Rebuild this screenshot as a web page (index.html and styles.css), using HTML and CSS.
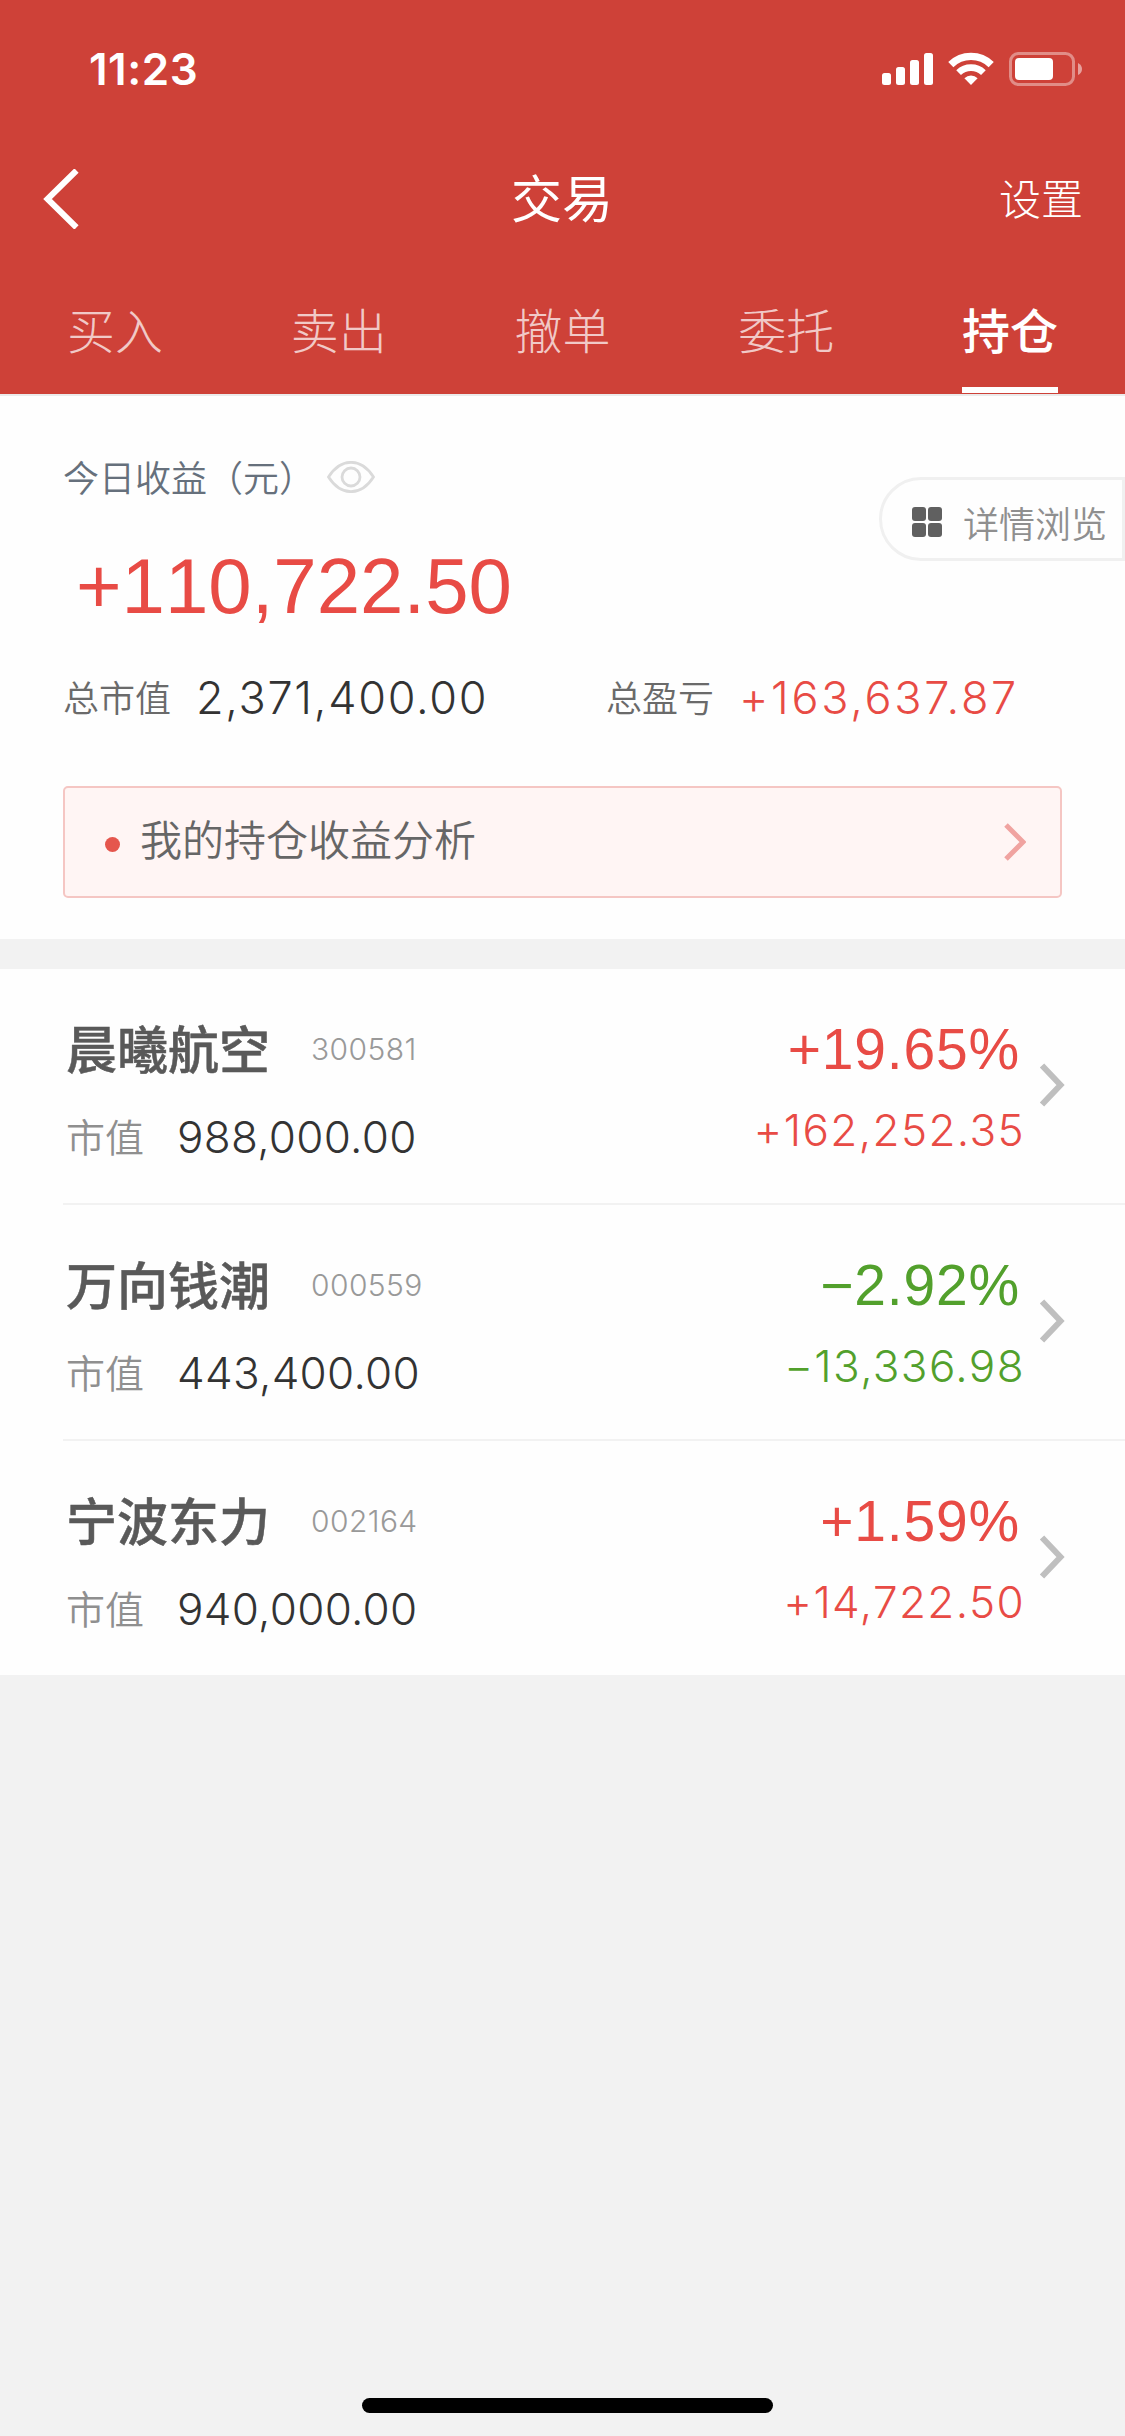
FILE: index.html
```html
<!DOCTYPE html>
<html lang="zh-CN">
<head>
  <meta charset="UTF-8">
  <title>交易</title>
  <link rel="stylesheet" href="styles.css">
</head>
<body>

  <header>
    <div class="status-bar">
      <span class="time">11:23</span>
      <svg class="signal" width="51" height="34" viewBox="0 0 51 34" fill="#fff">
        <rect x="0" y="21" width="9" height="12" rx="2.5"/>
        <rect x="14" y="15" width="9" height="18" rx="2.5"/>
        <rect x="28" y="8" width="9" height="25" rx="2.5"/>
        <rect x="42" y="1" width="9" height="32" rx="2.5"/>
      </svg>
      <svg class="wifi" width="46" height="34" viewBox="0 0 46 34" fill="none" stroke="#fff">
        <path d="M2.8 12.6 A29 29 0 0 1 43.2 12.6" stroke-width="7.4"/>
        <path d="M10.6 20.6 A18 18 0 0 1 35.4 20.6" stroke-width="6.8"/>
        <path d="M23 33 L16.4 26.2 A9.6 9.6 0 0 1 29.6 26.2 Z" fill="#fff" stroke="none"/>
      </svg>
      <svg class="battery" width="74" height="34" viewBox="0 0 74 34">
        <rect x="1.5" y="1.5" width="63" height="31" rx="8" fill="none" stroke="#fff" stroke-opacity=".4" stroke-width="3"/>
        <rect x="6" y="6" width="38" height="22" rx="4" fill="#fff"/>
        <path d="M69 11 Q73 13 73 17 Q73 21 69 23 Z" fill="#fff" fill-opacity=".5"/>
      </svg>
    </div>

    <div class="nav">
      <svg class="back" width="38" height="60" viewBox="0 0 38 60">
        <path d="M35.500 1.500 L6.500 30 L35.500 58.500" fill="none" stroke="#fff" stroke-width="6"/>
      </svg>
      <h1>交易</h1>
      <a class="setting">设置</a>
    </div>

    <nav class="tabs">
      <a><span>买入</span></a>
      <a><span>卖出</span></a>
      <a><span>撤单</span></a>
      <a><span>委托</span></a>
      <a class="active"><span>持仓</span></a>
    </nav>
  </header>

  <section class="summary">
    <div class="today">
      <span>今日收益（元）</span>
      <svg width="48" height="32" viewBox="0 0 48 32" fill="none" stroke="#dadada" stroke-width="2.8">
        <path d="M1.5 16 C14 -3.5 34 -3.5 46.5 16 C34 35.500 14 35.500 1.500 16 Z"/>
        <circle cx="24" cy="16" r="9"/>
      </svg>
    </div>
    <div class="today-profit">+110,722.50</div>
    <div class="totals">
      <div class="total"><label>总市值</label><b>2,371,400.00</b></div>
      <div class="total"><label>总盈亏</label><b class="up">+163,637.87</b></div>
    </div>
    <a class="analysis">
      <i class="dot"></i>
      <span>我的持仓收益分析</span>
      <svg width="22" height="38" viewBox="0 0 22 38">
        <path d="M2 2 L19 19 L2 36" fill="none" stroke="#f0a3a0" stroke-width="5"/>
      </svg>
    </a>
    <a class="detail">
      <svg width="30" height="30" viewBox="0 0 30 30" fill="#606060">
        <rect x="0" y="0" width="14" height="14" rx="3"/>
        <rect x="16" y="0" width="14" height="14" rx="3"/>
        <rect x="0" y="16" width="14" height="14" rx="3"/>
        <rect x="16" y="16" width="14" height="14" rx="3"/>
      </svg>
      <span>详情浏览</span>
    </a>
  </section>

  <ul class="stocks">
    <li>
      <div class="info">
        <div class="name"><span>晨曦航空</span><small>300581</small></div>
        <div class="value"><label>市值</label><b>988,000.00</b></div>
      </div>
      <div class="profit up">
        <div class="rate">+19.65%</div>
        <div class="amount">+162,252.35</div>
      </div>
      <svg class="arrow" width="26" height="44" viewBox="0 0 26 44"><path d="M3 2.500 L21.500 22 L3 41.500"/></svg>
    </li>
    <li>
      <div class="info">
        <div class="name"><span>万向钱潮</span><small>000559</small></div>
        <div class="value"><label>市值</label><b>443,400.00</b></div>
      </div>
      <div class="profit down">
        <div class="rate">−2.92%</div>
        <div class="amount">−13,336.98</div>
      </div>
      <svg class="arrow" width="26" height="44" viewBox="0 0 26 44"><path d="M3 2.500 L21.500 22 L3 41.500"/></svg>
    </li>
    <li>
      <div class="info">
        <div class="name"><span>宁波东力</span><small>002164</small></div>
        <div class="value"><label>市值</label><b>940,000.00</b></div>
      </div>
      <div class="profit up">
        <div class="rate">+1.59%</div>
        <div class="amount">+14,722.50</div>
      </div>
      <svg class="arrow" width="26" height="44" viewBox="0 0 26 44"><path d="M3 2.500 L21.500 22 L3 41.500"/></svg>
    </li>
  </ul>

  <div class="home-bar"></div>

</body>
</html>
```
FILE: styles.css
```css
* {
  box-sizing: border-box;
}
body {
  display: flex;
  flex-direction: column;
  width: 1125px;
  height: 2436px;
  margin: 0;
  background: #f2f2f2;
  color: #333;
  font-family: Inter, "Noto Sans CJK SC", sans-serif;
  overflow: hidden;
}
svg {
  display: block;
  flex: none;
}
label {
  font-weight: 350;
}
b {
  font-weight: 300;
}

/* header */
header {
  height: 394px;
  background: #ce4138;
  color: #fff;
}
.status-bar {
  display: flex;
  align-items: center;
  height: 138px;
  padding: 0 42px 0 89px;
}
.time {
  flex: 1;
  font-size: 44px;
  font-weight: 600;
  letter-spacing: .5px;
}
.wifi {
  margin: 0 15px 0 15px;
}
.nav {
  display: grid;
  grid-template-columns: 1fr auto 1fr;
  align-items: center;
  height: 122px;
  padding: 0 42px 0 41px;
}
h1 {
  margin: 0;
  padding-bottom: 6px;
  font-size: 51px;
  font-weight: 400;
}
.setting {
  justify-self: end;
  padding-bottom: 5px;
  font-size: 42px;
  font-weight: 300;
}
.tabs {
  display: flex;
  height: 134px;
  padding: 0 3px;
}
.tabs a {
  display: flex;
  flex: 1;
  justify-content: center;
  font-size: 48px;
  font-weight: 300;
  color: rgba(255, 255, 255, .72);
}
.tabs span {
  height: 133px;
  line-height: 143px;
}
.tabs .active {
  font-weight: 500;
  color: #fff;
}
.active span {
  border-bottom: 6px solid #fff;
}

/* summary */
.summary {
  position: relative;
  height: 545px;
  padding: 60px 63px 0 63px;
  border-top: 2px solid #ebebeb;
  background: #fefefe;
}
.today {
  display: flex;
  align-items: center;
  gap: 12px;
  height: 46px;
  font-size: 36px;
  font-weight: 350;
  line-height: 47px;
  color: #66707c;
}
.today svg {
  margin-bottom: 4px;
}
.today-profit {
  height: 100px;
  margin-top: 33px;
  padding-left: 13px;
  font-family: "Liberation Sans", sans-serif;
  font-size: 78px;
  font-kerning: none;
  line-height: 102px;
  color: #e84b45;
}
.totals {
  display: grid;
  grid-template-columns: 543px 1fr;
  margin-top: 31px;
}
.total {
  display: flex;
  align-items: center;
  height: 60px;
  white-space: nowrap;
}
.total label {
  width: 133px;
  font-size: 36px;
  color: #6a6a6a;
}
.total b {
  padding-top: 2px;
  font-size: 45px;
  letter-spacing: 1.7px;
}
.total .up {
  letter-spacing: 2.7px;
}
.analysis {
  display: flex;
  align-items: center;
  height: 112px;
  margin-top: 60px;
  padding: 0 34px 0 40px;
  border: 2px solid #f5c6c3;
  border-radius: 5px;
  background: #fff5f4;
  font-size: 42px;
  font-weight: 350;
  color: #666;
}
.analysis span {
  flex: 1;
  padding-bottom: 9px;
}
.dot {
  width: 15px;
  height: 15px;
  margin: 4px 20px 0 0;
  border-radius: 50%;
  background: #e5564d;
}

/* floating pill on the right edge */
.detail {
  position: absolute;
  top: 81px;
  right: 0;
  display: flex;
  align-items: center;
  width: 246px;
  height: 84px;
  padding: 6px 0 0 30px;
  border: 3px solid #f0f0f0;
  border-radius: 42px 0 0 42px;
  font-size: 36px;
  font-weight: 350;
  color: #8f8f8f;
  white-space: nowrap;
}
.detail span {
  margin-left: 21px;
}

/* stock list */
.stocks {
  margin: 30px 0 0;
  padding: 0 0 0 63px;
  background: #fefefe;
  list-style: none;
}
.stocks li {
  display: flex;
  height: 236px;
  padding: 42px 60px 0 3px;
  border-bottom: 2px solid #f2f2f2;
}
.stocks li:last-child {
  height: 234px;
  border-bottom: none;
}
.info {
  flex: 1;
}
.name {
  display: flex;
  align-items: center;
  height: 76px;
  font-size: 51px;
  font-weight: 500;
  color: #595959;
}
.name span {
  padding-bottom: 4px;
  -webkit-text-stroke: .5px #595959;
}
.name small {
  margin-left: 41px;
  font-size: 30px;
  font-weight: 300;
  letter-spacing: .4px;
  color: #999;
}
.value {
  display: flex;
  align-items: center;
  height: 100px;
}
.value label {
  width: 111px;
  padding-bottom: 4px;
  font-size: 39px;
  color: #8f8f8f;
}
.value b {
  font-size: 44px;
  letter-spacing: .3px;
}
.profit {
  text-align: right;
}
.rate {
  height: 76px;
  padding-right: 1px;
  font-family: "Liberation Sans", sans-serif;
  font-size: 57px;
  font-kerning: none;
  letter-spacing: .8px;
  line-height: 76px;
}
.amount {
  height: 88px;
  margin-right: -4px;
  font-size: 44px;
  font-weight: 300;
  letter-spacing: 1.4px;
  line-height: 87px;
}
.up {
  color: #e84b45;
}
.down {
  color: #52a02c;
}
.arrow {
  margin: 52px 0 0 18px;
}
.arrow path {
  fill: none;
  stroke: #bfbfbf;
  stroke-width: 6;
}

.home-bar {
  width: 411px;
  height: 15px;
  margin: auto auto 23px 362px;
  border-radius: 8px;
  background: #000;
}
```
